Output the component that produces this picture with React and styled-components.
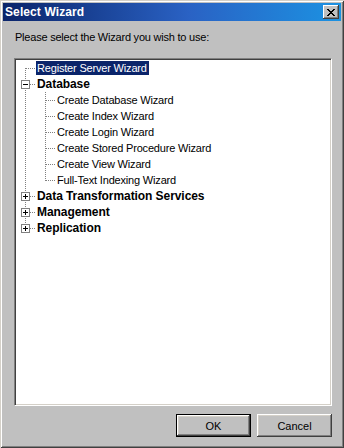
import React from "react";
import styled, { createGlobalStyle } from "styled-components";

const GlobalStyle = createGlobalStyle`
  html, body {
    margin: 0;
    padding: 0;
    background: #c0c0c0;
  }
  * {
    box-sizing: border-box;
  }
`;

const Window = styled.div`
  width: 344px;
  height: 448px;
  padding: 3px;
  display: flex;
  flex-direction: column;
  background: #c0c0c0;
  box-shadow:
    inset 1px 1px #d4d0c8,
    inset -1px -1px #404040,
    inset 2px 2px #ffffff,
    inset -2px -2px #808080;
  font-family: "Liberation Sans", Arial, sans-serif;
  font-size: 11px;
  color: #000;
`;

const TitleBar = styled.div`
  height: 18px;
  display: flex;
  align-items: center;
  justify-content: space-between;
  padding: 0 2px 0 2px;
  background: linear-gradient(to right, #0a246a 0%, #2a62c4 55%, #1c92e2 100%);
`;

const Title = styled.span`
  color: #fff;
  font-weight: bold;
  font-size: 12px;
  letter-spacing: 0.1px;
`;

const CloseButton = styled.div`
  width: 16px;
  height: 14px;
  display: flex;
  align-items: center;
  justify-content: center;
  background: #c0c0c0;
  box-shadow:
    inset -1px -1px #404040,
    inset 1px 1px #ffffff,
    inset -2px -2px #808080;
`;

const Body = styled.div`
  flex: 1;
  display: flex;
  flex-direction: column;
  padding: 9px 9px 8px 11px;
`;

const Prompt = styled.div`
  line-height: 14px;
  height: 14px;
  margin: 0 0 14px 1px;
  letter-spacing: -0.22px;
`;

const TreeBox = styled.div`
  flex: 1;
  background: #fff;
  border: 1px solid;
  border-color: #808080 #ffffff #ffffff #808080;
  box-shadow: inset 1px 1px #404040, inset -1px -1px #d4d0c8;
  padding: 1px;
  overflow: hidden;
`;

const Row = styled.div`
  height: 16px;
  display: flex;
  align-items: center;
`;

const Label = styled.span`
  line-height: 14px;
  padding: 0 2px 0 1px;
  white-space: nowrap;
  font-weight: ${(p) => (p.$bold ? "bold" : "normal")};
  font-size: ${(p) => (p.$bold ? "12px" : "11px")};
  letter-spacing: ${(p) => (p.$bold ? "-0.07px" : "-0.18px")};
  background: ${(p) => (p.$selected ? "#0a246a" : "transparent")};
  color: ${(p) => (p.$selected ? "#fff" : "#000")};
`;

const Footer = styled.div`
  display: flex;
  justify-content: flex-end;
  gap: 6px;
  margin-top: 8px;
`;

const Button = styled.button`
  width: 75px;
  height: 23px;
  padding: 0;
  border: ${(p) => (p.$default ? "1px solid #000" : "none")};
  background: #c0c0c0;
  font-family: "Liberation Sans", Arial, sans-serif;
  font-size: 11px;
  color: #000;
  box-shadow:
    inset -1px -1px #404040,
    inset 1px 1px #ffffff,
    inset -2px -2px #808080,
    inset 2px 2px #d4d0c8;
`;

const dots = { stroke: "#808080", strokeWidth: 1, strokeDasharray: "1 1", shapeRendering: "crispEdges" };

// one gutter cell per indent level; trunks say which ancestor lines keep running
const Gutter = ({ level, position, expander, trunks = [] }) => {
  const width = 20 * (level + 1);
  const x = 20 * level + 9.5;
  const y1 = position === "first" ? 8 : 0;
  const y2 = position === "last" ? 9 : 16;
  return (
    <svg width={width} height="16" style={{ flex: "none" }}>
      {trunks.map((t) => (
        <line key={t} x1={20 * t + 9.5} y1="0" x2={20 * t + 9.5} y2="16" {...dots} />
      ))}
      <line x1={x} y1={y1} x2={x} y2={y2} {...dots} />
      <line x1={x} y1="8.5" x2={20 * level + 20} y2="8.5" {...dots} />
      {expander && (
        <g shapeRendering="crispEdges">
          <rect x={x - 4} y="4.5" width="8" height="8" fill="#fff" stroke="#808080" />
          <line x1={x - 2.5} y1="8.5" x2={x + 2.5} y2="8.5" stroke="#000" />
          {expander === "plus" && <line x1={x} y1="6" x2={x} y2="11" stroke="#000" />}
        </g>
      )}
    </svg>
  );
};

const items = [
  { text: "Register Server Wizard", level: 0, position: "first", selected: true },
  { text: "Database", level: 0, expander: "minus", bold: true },
  { text: "Create Database Wizard", level: 1, trunks: [0] },
  { text: "Create Index Wizard", level: 1, trunks: [0] },
  { text: "Create Login Wizard", level: 1, trunks: [0] },
  { text: "Create Stored Procedure Wizard", level: 1, trunks: [0] },
  { text: "Create View Wizard", level: 1, trunks: [0] },
  { text: "Full-Text Indexing Wizard", level: 1, trunks: [0], position: "last" },
  { text: "Data Transformation Services", level: 0, expander: "plus", bold: true },
  { text: "Management", level: 0, expander: "plus", bold: true },
  { text: "Replication", level: 0, expander: "plus", bold: true, position: "last" },
];

const App = () => (
  <>
    <GlobalStyle />
    <Window>
      <TitleBar>
        <Title>Select Wizard</Title>
        <CloseButton>
          <svg width="8" height="7" viewBox="0 0 8 7" shapeRendering="crispEdges">
            <path d="M0 0h2v1h1v1h2v-1h1v-1h2v1h-1v1h-1v1h-1v1h1v1h1v1h1v1h-2v-1h-1v-1h-2v1h-1v1h-2v-1h1v-1h1v-1h1v-1h-1v-1h-1v-1h-1z" fill="#000" />
          </svg>
        </CloseButton>
      </TitleBar>
      <Body>
        <Prompt>Please select the Wizard you wish to use:</Prompt>
        <TreeBox>
          {items.map((it) => (
            <Row key={it.text}>
              <Gutter level={it.level} position={it.position} expander={it.expander} trunks={it.trunks} />
              <Label $bold={it.bold} $selected={it.selected}>{it.text}</Label>
            </Row>
          ))}
        </TreeBox>
        <Footer>
          <Button $default>OK</Button>
          <Button>Cancel</Button>
        </Footer>
      </Body>
    </Window>
  </>
);

export default App;
